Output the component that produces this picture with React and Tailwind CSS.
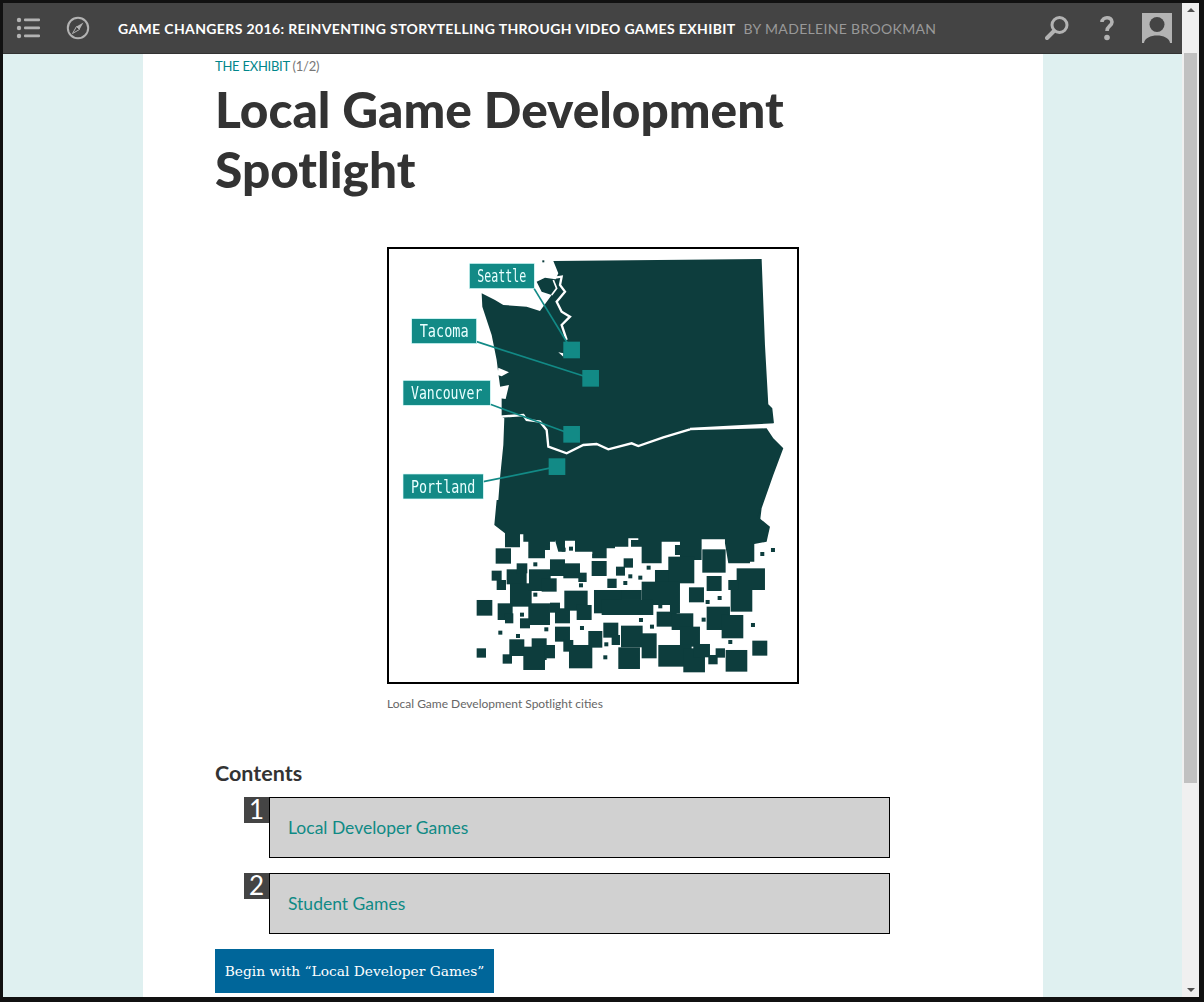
import React from 'react';

// cuadraditos del mapa (coordenadas a 3x)
const puntos = [[445,187],[552,140],[530,143],[622,162],[785,197],[730,223],[760,227],[715,243],[582,250],[445,278],[820,313],[405,338],[340,392],[393,402],[478,382],[585,378],[762,354],[795,374],[950,353],[1098,369],[1030,420],[658,427],[655,466],[962,300],[998,288],[1126,156],[1158,144]];

const cuadros = [[332,145,46,46],[320,212,30,30],[335,240,28,30],[365,208,60,45],[395,190,32,30],[375,250,65,70],[432,208,65,65],[470,235,45,40],[495,178,45,50],[535,190,50,45],[580,218,25,28],[620,183,45,45],[693,200,27,27],[716,175,28,28],[667,236,28,28],[810,210,65,60],[850,170,78,80],[770,245,115,70],[627,270,85,70],[650,300,155,45],[710,270,60,30],[538,272,70,60],[575,315,45,45],[510,325,45,45],[495,308,30,30],[430,310,65,65],[405,355,30,30],[338,310,45,50],[360,340,25,30],[275,300,47,47],[275,445,28,28],[353,463,28,28],[373,418,45,50],[440,415,45,65],[415,440,65,70],[480,435,30,40],[510,380,45,45],[535,420,30,35],[552,435,70,70],[610,393,42,50],[655,368,45,45],[680,405,25,30],[700,442,65,65],[708,377,65,65],[770,400,45,75],[815,335,60,45],[855,315,30,25],[860,340,65,50],[885,380,60,60],[820,435,100,65],[895,445,65,72],[925,432,50,40],[970,465,28,28],[992,445,28,28],[1022,450,65,65],[1102,422,45,45],[912,262,45,45],[965,320,70,70],[1010,345,65,70],[1037,270,65,65],[1055,205,85,65],[965,228,45,45],[1030,240,30,30],[952,148,70,70]];

const etiquetas = [
  { x: 253, y: 55, w: 195, h: 76, t: 'Seattle', lx: 447, ly: 130, px: 535, py: 290 },
  { x: 80, y: 221, w: 195, h: 75, t: 'Tacoma', lx: 275, ly: 290, px: 592, py: 375 },
  { x: 54, y: 406, w: 262, h: 75, t: 'Vancouver', lx: 316, ly: 478, px: 535, py: 543 },
  { x: 54, y: 687, w: 241, h: 75, t: 'Portland', lx: 295, ly: 710, px: 491, py: 640 },
];

function Mapa() {
  return (
    <svg viewBox="389 249 408 433" className="block w-[408px] h-[433px] blur-[0.4px]">
      <rect x="389" y="249" width="408" height="433" fill="#fff" />
      <g transform="translate(385 245) scale(0.3333)">
        {/* Washington y Oregon, el rio va encima en blanco */}
        <polygon fill="#0d3d3d" points="505,48 1130,42 1140,300 1150,478 1162,490 1167,535 1145,550 1165,580 1195,610 1165,690 1130,790 1125,830 335,830 345,700 355,600 358,520 350,515 350,460 340,385 335,345 320,270 292,185 290,145 330,165 355,180 425,185 465,198 500,150 470,140 455,110 480,98 512,103 520,85" />
        <polyline fill="none" stroke="#fff" strokeWidth="7" points="345,515 415,510 425,525 465,530 485,555 490,605 545,625 595,600 635,597 670,613 740,595 760,603 835,577 915,553" />
        <polygon fill="#fff" points="915,548 1170,535 1170,543 1145,550 915,556" />
        <polyline fill="none" stroke="#fff" strokeWidth="7" points="510,98 530,95 525,120 540,140 515,170 530,200 555,215 530,240 545,285" />
        <polyline fill="none" stroke="#fff" strokeWidth="5" points="500,150 515,130 505,105" />
        <path fill="#fff" d="M340 368 L372 382 L350 394 L338 390 Z M345 425 L372 420 L362 462 L345 460 Z M520 322 L535 325 L535 335 Z" />
        <rect x="472" y="46" width="6" height="6" fill="#0d3d3d" />
      </g>
      <g transform="translate(385 500) scale(0.3333)" fill="#0d3d3d">
        <polygon points="335,0 328,75 360,100 360,142 405,142 405,103 415,103 415,125 430,125 430,175 480,175 480,150 495,150 495,125 510,125 510,120 520,155 540,155 540,122 570,122 570,155 622,155 622,175 665,175 665,145 690,145 690,140 730,140 730,115 760,115 760,120 738,120 738,140 770,140 770,190 830,190 830,125 885,125 885,135 870,135 870,165 885,165 885,180 950,180 950,118 1020,118 1020,130 1030,190 1095,190 1095,185 1108,185 1108,132 1145,125 1155,80 1118,50 1135,0" />
        {cuadros.map(([x, y, w, h], i) => <rect key={i} x={x} y={y} width={w} height={h} />)}
        {puntos.map(([x, y], i) => <rect key={i} x={x} y={y} width="12" height="12" />)}
      </g>
      <g transform="translate(385 245) scale(0.3333)">
        {etiquetas.map(e => (
          <g key={e.t}>
            <line x1={e.lx} y1={e.ly} x2={e.px + 25} y2={e.py + 25} stroke="#128a86" strokeWidth="5" />
            <rect x={e.px} y={e.py} width="50" height="50" fill="#128a86" />
            <rect x={e.x} y={e.y} width={e.w} height={e.h} fill="#128a86" stroke="#dff" strokeWidth="2" />
            <text x={e.x + e.w / 2} y={e.y + e.h / 2 + 19} textAnchor="middle" fill="#eaffff" fontFamily="DejaVu Sans Mono, monospace" fontSize="54" textLength={e.w - 48} lengthAdjust="spacingAndGlyphs">{e.t}</text>
          </g>
        ))}
      </g>
    </svg>
  );
}

function IconoLista() {
  return (
    <svg viewBox="0 0 26 22" className="w-[26px] h-[22px]" fill="#b3b3b3">
      <circle cx="3" cy="3" r="2.2" /><rect x="8" y="1.6" width="16" height="2.6" rx="1" />
      <circle cx="3" cy="11" r="2.2" /><rect x="8" y="9.6" width="16" height="2.6" rx="1" />
      <circle cx="3" cy="19" r="2.2" /><rect x="8" y="17.6" width="16" height="2.6" rx="1" />
    </svg>
  );
}

function IconoBrujula() {
  return (
    <svg viewBox="0 0 24 24" className="w-[24px] h-[24px]" fill="none">
      <circle cx="12" cy="12" r="10.2" stroke="#b3b3b3" strokeWidth="2" />
      <path d="M17.5 6.5 L13.5 13.5 L10.5 10.5 Z" fill="#b3b3b3" />
      <path d="M6.5 17.5 L10.5 10.5 L13.5 13.5 Z" stroke="#b3b3b3" strokeWidth="1" />
    </svg>
  );
}

function IconoLupa() {
  return (
    <svg viewBox="0 0 24 26" className="w-[24px] h-[26px]" fill="none" stroke="#b3b3b3">
      <circle cx="14.5" cy="10" r="7.5" strokeWidth="3" />
      <path d="M9 16 L2 23" strokeWidth="4" strokeLinecap="round" />
    </svg>
  );
}

function IconoAyuda() {
  return (
    <svg viewBox="0 0 14 26" className="w-[14px] h-[26px]" fill="none">
      <path d="M2 7 C2 1.5 12 1 12 7 C12 11 7 11 7 16" stroke="#b3b3b3" strokeWidth="3.6" />
      <circle cx="7" cy="22.5" r="2.8" fill="#b3b3b3" />
    </svg>
  );
}

function IconoUsuario() {
  return (
    <svg viewBox="0 0 30 30" className="w-[30px] h-[30px]">
      <rect width="30" height="30" fill="#b3b3b3" />
      <circle cx="15" cy="11.5" r="7.5" fill="#444" />
      <path d="M2 30 C3 20 27 20 28 30 Z" fill="#444" />
    </svg>
  );
}

function Encabezado() {
  return (
    <div className="h-[51px] shrink-0 bg-[#444444] border-b border-[#333] flex items-center font-['Lato',sans-serif]">
      <div className="ml-[13px] w-[26px] flex"><IconoLista /></div>
      <div className="ml-[24px] flex"><IconoBrujula /></div>
      <div className="ml-[28px] text-white font-bold text-[14px] tracking-[0.37px] whitespace-nowrap">GAME CHANGERS 2016: REINVENTING STORYTELLING THROUGH VIDEO GAMES EXHIBIT</div>
      <div className="ml-[8px] text-[#999] text-[14px] tracking-[0.33px] whitespace-nowrap">BY MADELEINE BROOKMAN</div>
      <div className="ml-auto flex items-center">
        <IconoLupa />
        <div className="ml-[31px] flex"><IconoAyuda /></div>
        <div className="ml-[28px] mr-[10px] flex"><IconoUsuario /></div>
      </div>
    </div>
  );
}

function Contenido({ n, titulo }) {
  return (
    <div className="flex ml-[29px] w-[646px]">
      <div className="w-[25px] h-[26px] shrink-0 bg-[#444] text-white text-[26px] leading-[25px] text-center">{n}</div>
      <div className="flex-1 h-[61px] bg-[#d1d1d1] border border-black pl-[18px] pt-[2px] flex items-center text-[17.5px] text-[#0f8a85]">{titulo}</div>
    </div>
  );
}

function Barra() {
  return (
    <div className="w-[17px] shrink-0 bg-[#f0f0f0] flex flex-col items-center">
      <div className="h-[14px] flex items-center"><div className="w-0 h-0 border-x-[4px] border-x-transparent border-b-[4px] border-b-[#505050]" /></div>
      <div className="w-[13px] h-[730px] mt-[36px] bg-[#c1c1c1]" />
      <div className="mt-auto h-[14px] flex items-center"><div className="w-0 h-0 border-x-[4px] border-x-transparent border-t-[4px] border-t-[#505050]" /></div>
    </div>
  );
}

export default function App() {
  return (
    <div className="w-[1204px] h-[1002px] overflow-hidden bg-[#111] border-t-[3px] border-l-[3px] border-r-[5px] border-b-[5px] border-[#111] flex font-['Lato',sans-serif]">
      <div className="flex-1 min-w-0 flex flex-col">
        <Encabezado />
        <div className="flex-1 min-h-0 bg-[#dff0f0] overflow-hidden">
          <div className="ml-[140px] w-[900px] h-full bg-white pl-[72px]">
            <div className="pt-[4px] text-[13px] tracking-[-0.25px] leading-[17px]">
              <span className="text-[#00868b]">THE EXHIBIT</span> <span className="text-[#777]">(1/2)</span>
            </div>
            <h1 className="mt-[4px] text-[49.6px] leading-[60px] font-black text-[#333] w-[650px]">Local Game Development Spotlight</h1>
            <div className="mt-[48px] ml-[172px] w-[412px] border-2 border-black overflow-hidden"><Mapa /></div>
            <div className="ml-[172px] mt-[13px] text-[12px] leading-[14px] text-[#666]">Local Game Development Spotlight cities</div>
            <div className="mt-[50px] text-[21.5px] leading-[24px] font-bold text-[#333]">Contents</div>
            <div className="mt-[12px] flex flex-col gap-[15px]">
              <Contenido n="1" titulo="Local Developer Games" />
              <Contenido n="2" titulo="Student Games" />
            </div>
            <div className="mt-[15px] w-[279px] h-[44px] bg-[#00669a] text-white flex items-center justify-center text-[13.8px] font-['DejaVu_Serif',serif] whitespace-nowrap">Begin with “Local Developer Games”</div>
          </div>
        </div>
      </div>
      <Barra />
    </div>
  );
}
